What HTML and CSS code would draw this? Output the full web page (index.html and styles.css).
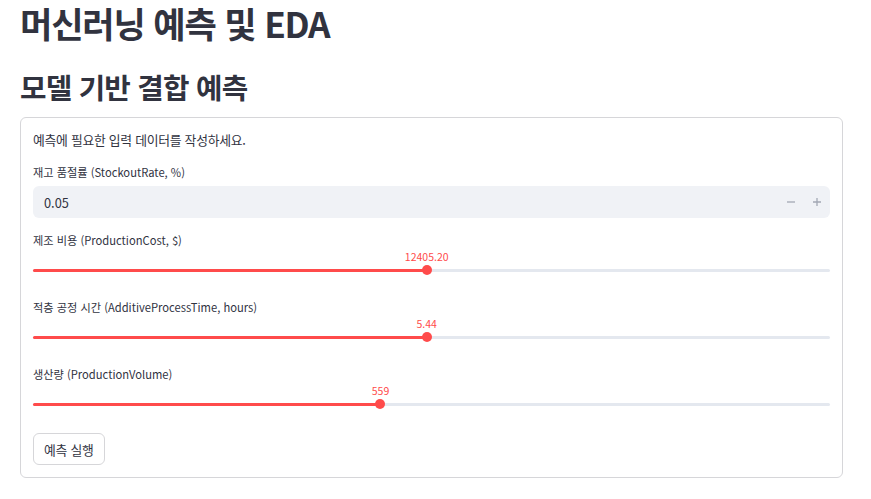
FILE: index.html
```html
<!DOCTYPE html>
<html lang="ko">
<head>
<meta charset="utf-8">
<link rel="stylesheet" href="styles.css">
</head>
<body>
<main class="app">
  <h1 class="title">머신러닝 예측 및 EDA</h1>
  <h2 class="subtitle">모델 기반 결합 예측</h2>
  <section class="card">
    <p class="intro">예측에 필요한 입력 데이터를 작성하세요.</p>
    <div class="field">
      <label class="label">재고 품절률 (StockoutRate, %)</label>
      <div class="number">
        <span class="number-value">0.05</span>
        <span class="steps">
          <span class="step"><svg width="10" height="10" viewBox="0 0 10 10"><path d="M1 5h8" stroke="#a3a8b4" stroke-width="1.3"/></svg></span>
          <span class="step"><svg width="10" height="10" viewBox="0 0 10 10"><path d="M1 5h8M5 1v8" stroke="#a3a8b4" stroke-width="1.3"/></svg></span>
        </span>
      </div>
    </div>
    <div class="field">
      <label class="label">제조 비용 (ProductionCost, $)</label>
      <div class="slider">
        <div class="track"><div class="fill" style="width: 49.4%"></div><div class="thumb" style="left: 49.4%"><span class="thumb-value">12405.20</span></div></div>
      </div>
    </div>
    <div class="field">
      <label class="label">적층 공정 시간 (AdditiveProcessTime, hours)</label>
      <div class="slider">
        <div class="track"><div class="fill" style="width: 49.4%"></div><div class="thumb" style="left: 49.4%"><span class="thumb-value">5.44</span></div></div>
      </div>
    </div>
    <div class="field">
      <label class="label">생산량 (ProductionVolume)</label>
      <div class="slider">
        <div class="track"><div class="fill" style="width: 43.6%"></div><div class="thumb" style="left: 43.6%"><span class="thumb-value">559</span></div></div>
      </div>
    </div>
    <div class="actions">
      <button class="btn">예측 실행</button>
    </div>
  </section>
</main>
</body>
</html>
```
FILE: styles.css
```css
* { box-sizing: border-box; }
html, body { margin: 0; padding: 0; background: #ffffff; }
body {
  font-family: "Noto Sans CJK KR", "Noto Sans", sans-serif;
  color: #31333f;
}
.app {
  display: flex;
  flex-direction: column;
  padding: 0 28px 0 20px;
}
.title {
  margin: 0;
  font-size: 35.2px;
  line-height: 46px;
  font-weight: 700;
  letter-spacing: -1.2px;
}
.subtitle {
  margin: 22px 0 0;
  font-size: 28.8px;
  line-height: 37px;
  font-weight: 700;
  letter-spacing: -0.8px;
}
.card {
  margin-top: 12px;
  border: 1px solid #d6d6d9;
  border-radius: 6px;
  padding: 12px 12px 12px;
  display: flex;
  flex-direction: column;
  gap: 12.8px;
}
.intro {
  margin: 0;
  font-size: 12.8px;
  line-height: 20px;
  letter-spacing: -0.25px;
}
.field { display: flex; flex-direction: column; }
.label {
  font-size: 11.2px;
  line-height: 19px;
  margin-bottom: 3.2px;
}
.number {
  height: 32px;
  margin-top: 1.5px;
  background: #f0f2f6;
  border-radius: 6px;
  display: flex;
  align-items: center;
  justify-content: space-between;
  padding-left: 11px;
  font-size: 12.8px;
}
.steps { display: flex; align-items: center; height: 100%; }
.step {
  width: 26px;
  height: 100%;
  display: flex;
  align-items: center;
  justify-content: center;
}
.slider {
  height: 32px;
  display: flex;
  align-items: center;
  padding-top: 2px;
}
.track {
  position: relative;
  width: 100%;
  height: 3.6px;
  border-radius: 2px;
  background: #e4e8ef;
}
.fill {
  height: 100%;
  background: #ff4b4b;
  border-radius: 2px;
}
.thumb {
  position: absolute;
  top: 50%;
  width: 10px;
  height: 10px;
  margin: -5px 0 0 -5px;
  border-radius: 50%;
  background: #ff4b4b;
}
.thumb-value {
  position: absolute;
  left: 50%;
  bottom: 12px;
  transform: translateX(-50%);
  font-size: 10.5px;
  line-height: 12px;
  color: #ff4b4b;
  white-space: nowrap;
}
.actions { display: flex; padding-top: 1px; }
.btn {
  font-family: inherit;
  font-size: 12.8px;
  letter-spacing: -0.2px;
  color: #31333f;
  background: #ffffff;
  border: 1px solid #d6d6d9;
  border-radius: 6px;
  height: 32px;
  padding: 0 10px;
}
```
